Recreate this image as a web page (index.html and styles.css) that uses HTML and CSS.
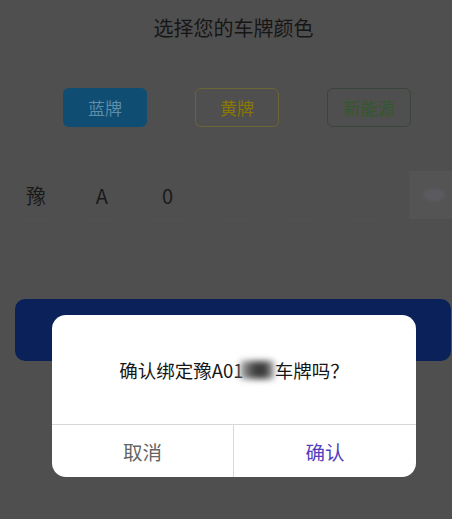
FILE: index.html
```html
<!DOCTYPE html>
<html lang="zh">
<head>
<meta charset="utf-8">
<link rel="stylesheet" href="styles.css">
</head>
<body>
<div class="page">
  <div class="title">选择您的车牌颜色</div>
  <div class="colors">
    <div class="chip chip-blue">蓝牌</div>
    <div class="chip chip-yellow">黄牌</div>
    <div class="chip chip-green">新能源</div>
  </div>
  <div class="plate">
    <div class="slot">豫</div>
    <div class="slot">A</div>
    <div class="slot">0</div>
    <div class="slot"></div>
    <div class="slot"></div>
    <div class="slot"></div>
    <div class="keybox"><span class="dot"></span></div>
  </div>
  <div class="submit"></div>
</div>
<div class="dialog">
  <div class="msg">确认绑定豫A01<span class="blur"></span>车牌吗？</div>
  <div class="actions">
    <div class="act cancel">取消</div>
    <div class="act ok">确认</div>
  </div>
</div>
</body>
</html>
```
FILE: styles.css
```css
html, body {
  margin: 0;
  padding: 0;
}
body {
  width: 452px;
  height: 519px;
  overflow: hidden;
  background: #4f4f4f;
  font-family: "Noto Sans CJK SC", "Noto Sans", sans-serif;
  position: relative;
}
.page {
  display: flex;
  flex-direction: column;
}
.title {
  margin-top: 14px;
  height: 28px;
  line-height: 28px;
  text-align: center;
  font-size: 20px;
  color: #161616;
  padding-left: 15px;
}
.colors {
  display: flex;
  margin-top: 46px;
  padding-left: 63px;
  gap: 48px;
}
.chip {
  width: 84px;
  height: 39px;
  box-sizing: border-box;
  border-radius: 6px;
  display: flex;
  align-items: center;
  justify-content: center;
  font-size: 17px;
}
.chip-blue {
  background: #0f4d72;
  color: #5d8eaa;
}
.chip-yellow {
  border: 1.5px solid #6a6534;
  color: #8a7800;
}
.chip-green {
  border: 1.5px solid #3a443a;
  color: #34582c;
}
.plate {
  display: flex;
  margin-top: 43px;
  height: 50px;
  align-items: center;
  padding-left: 14px;
}
.slot {
  width: 44px;
  margin-right: 22px;
  height: 50px;
  display: flex;
  align-items: center;
  justify-content: center;
  font-size: 20px;
  color: #1a1a1a;
  position: relative;
}
.slot::after {
  content: "";
  position: absolute;
  left: 8px;
  right: 8px;
  bottom: 0;
  height: 1px;
  background: #525252;
}
.keybox {
  margin-left: auto;
  width: 43px;
  height: 48px;
  box-sizing: border-box;
  border-top: 1px solid #56544f;
  border-bottom: 1px solid #56544f;
  border-left: 2px solid #535353;
  background: #545454;
  display: flex;
  align-items: center;
  justify-content: center;
}
.dot {
  width: 22px;
  height: 14px;
  border-radius: 11px 11px 11px 11px / 6px 6px 8px 8px;
  background: #5a5a60;
  filter: blur(1.5px);
  margin-left: 4px;
}
.submit {
  margin-top: 79px;
  margin-left: 15px;
  margin-right: 1px;
  height: 62px;
  border-radius: 10px;
  background: #0a2259;
}
.dialog {
  position: absolute;
  left: 52px;
  top: 315px;
  width: 364px;
  height: 162px;
  background: #fff;
  border-radius: 14px;
  display: flex;
  flex-direction: column;
  overflow: hidden;
}
.msg {
  height: 109px;
  display: flex;
  align-items: center;
  justify-content: center;
  font-size: 18.5px;
  color: #161616;
  box-sizing: border-box;
}
.blur {
  display: inline-block;
  width: 34px;
  height: 18px;
  margin-left: -4px;
  margin-right: 1px;
  background: linear-gradient(90deg, #b0b0b0, #444 40%, #333 70%, #aaa);
  filter: blur(3px);
}
.actions {
  flex: 1;
  display: flex;
  border-top: 1px solid #d8d8d8;
}
.act {
  display: flex;
  align-items: center;
  justify-content: center;
  font-size: 19.5px;
  box-sizing: border-box;
}
.cancel {
  width: 182px;
  color: #666;
  border-right: 1px solid #d8d8d8;
}
.ok {
  flex: 1;
  color: #5040c0;
}
```
